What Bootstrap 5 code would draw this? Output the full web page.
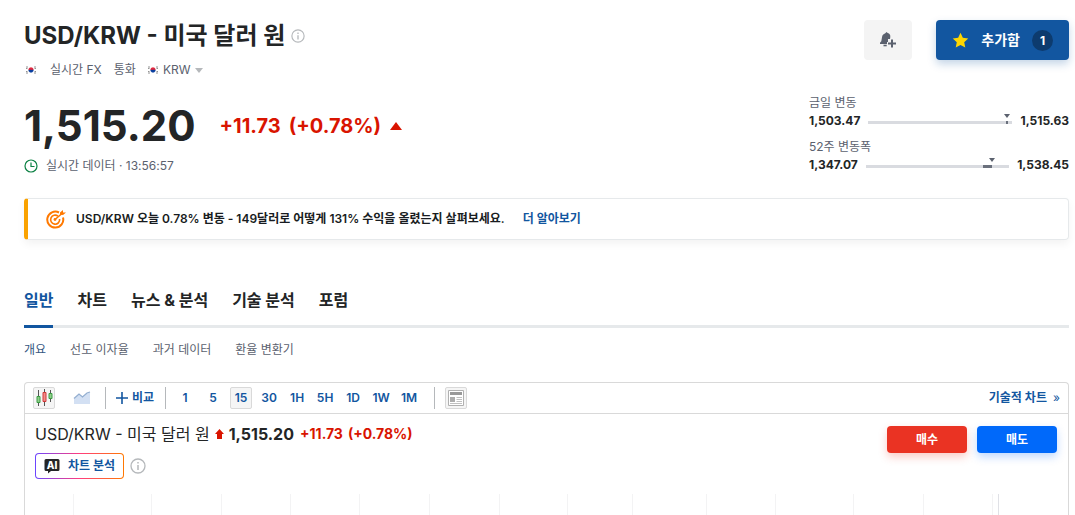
<!DOCTYPE html>
<html lang="ko">
<head>
<meta charset="utf-8">
<meta name="viewport" content="width=device-width, initial-scale=1">
<title>USD/KRW - 미국 달러 원</title>
<link href="https://cdn.jsdelivr.net/npm/bootstrap@5.3.0/dist/css/bootstrap.min.css" rel="stylesheet">
<style>
  body { font-family: Inter, "Noto Sans CJK KR", sans-serif; color: #232526; font-size: 12px; line-height: 16px; }
  a { text-decoration: none; color: #1256a0; }
  svg { display: block; flex: none; }
  .page-wrap { min-height: 100vh; padding: 16px 6px 0 24px; }
  .pair-head { gap: 6px; }
  .pair-title { font-size: 24px; line-height: 40px; font-weight: 700; }
  .muted { color: #5b616e; }
  .btn-bell { width: 48px; height: 40px; background: #f4f4f4; border-radius: 4px; color: #5b616e; }
  .btn-star { height: 40px; background: #1256a0; color: #fff; border-radius: 4px; font-size: 14px; line-height: 20px; font-weight: 700; padding: 0 16px; box-shadow: 0 4px 8px rgba(18,86,160,.25); }
  .btn-star:hover { background: #0f4a8a; color: #fff; }
  .count { width: 21px; height: 21px; border-radius: 50%; background: #0d3b6e; font-size: 12px; line-height: 21px; }
  .pair-meta { height: 20px; padding-left: 2px; }
  .feed { margin: 0 12px 0 14px; }
  .quote { margin-top: 15px; }
  .price-row { line-height: 62px; }
  .last-price { font-size: 42px; font-weight: 700; }
  .change { font-size: 20px; font-weight: 700; color: #d91400; }
  .data-time { line-height: 18px; }
  .ranges { width: 260px; }
  .range-row { font-weight: 700; gap: 8px; height: 20px; }
  .track { height: 3px; background: #d9dbe0; position: relative; top: 1px; }
  .track-fill { position: absolute; top: 0; height: 3px; background: #6a707c; }
  .track-pin { position: absolute; top: -7px; margin-left: -3px; border: 3px solid transparent; border-top: 4px solid #5b616e; border-bottom: 0; }
  .promo { height: 42px; margin-top: 23px; border: 1px solid #e6e9eb; border-left: 4px solid #faa200; border-radius: 4px; box-shadow: 0 4px 8px rgba(0,0,0,.05); padding-left: 18px; gap: 10px; font-weight: 600; color: #181c21; }
  .tabs-main { gap: 24px; border-bottom: 3px solid #e6e9eb; height: 40px; margin-top: 48px; }
  .tabs-main a { font-size: 16px; line-height: 24px; font-weight: 700; color: #232526; height: 40px; border-bottom: 3px solid transparent; }
  .tabs-main a.active { color: #1256a0; border-color: #1256a0; }
  .tabs-sub { gap: 24px; margin: 14px 0 24px; }
  .tabs-sub a { color: #5b616e; }
  .tabs-sub a.active { color: #35567f; }
  .chart-box { border: 1px solid #d9d9d9; border-bottom: 0; border-radius: 4px 4px 0 0; }
  .toolbar { height: 31px; border-bottom: 1px solid #d9d9d9; padding: 0 8px; }
  .toolbar .btn { font-size: 12px; line-height: 16px; font-weight: 600; color: #1256a0; padding: 0; border: 1px solid transparent; border-radius: 2px; height: 22px; min-width: 22px; display: flex; align-items: center; justify-content: center; }
  .toolbar .btn.on { background: #f5f5f5; border-color: #d9d9d9; }
  .toolbar a { font-weight: 600; }
  .compare { margin: 0 10px 0 12px; gap: 9px; }
  .spans { gap: 6px; margin: 0 14px 0 8px; }
  .sep { width: 1px; height: 22px; background: #b5b8bb; }
  .news-tool { gap: 10px; }
  .chart-head { padding: 10px 11px 0 10px; }
  .chart-name { font-size: 16px; line-height: 20px; gap: 5px; }
  .chart-change { font-size: 14px; font-weight: 700; color: #d91400; }
  .trade-pair { gap: 10px; padding-top: 2px; }
  .trade { width: 80px; height: 27px; font-size: 12px; line-height: 16px; font-weight: 700; color: #fff; padding: 0; border: 0; border-radius: 4px; }
  .trade:hover { color: #fff; }
  .sell, .sell:hover { background: #ea3323; box-shadow: 0 4px 8px rgba(234,51,35,.25); }
  .buy, .buy:hover { background: #0069fa; box-shadow: 0 4px 8px rgba(0,105,250,.25); }
  .ai-row { gap: 6px; margin-top: 9px; }
  .ai-btn { height: 26px; gap: 8px; border: 1px solid transparent; border-radius: 4px; background: linear-gradient(#fff,#fff) padding-box, linear-gradient(90deg,#6a45ff,#ff3d7f 50%,#ff7901) border-box; color: #1256a0; font-size: 12px; line-height: 16px; font-weight: 700; padding: 0 8px; }
  .plot { min-height: 20px; margin-top: 15px; position: relative; }
  .plot i { position: absolute; top: 0; bottom: 0; width: 1px; background: #f3f3f4; }
  .plot i.axis { background: #e0e1e6; }
</style>
</head>
<body>
<svg width="0" height="0" class="position-absolute" aria-hidden="true">
  <symbol id="flag" viewBox="0 0 10 8"><path d="M0 1h2M0 2.500h1.500M8 1h2M8.500 2.500H10M0 5.500h1.500M0 7h2M8.500 5.500H10M8 7h2" stroke="#777" stroke-width=".8"/><path d="M2.600 4a2.400 2.400 0 0 1 4.800 0z" fill="#e2263c" stroke="#e2263c" stroke-width=".4"/><path d="M2.600 4a2.400 2.400 0 0 0 4.800 0z" fill="#0b3fa0" stroke="#0b3fa0" stroke-width=".4"/></symbol>
  <symbol id="info" viewBox="0 0 16 16"><circle cx="8" cy="8" r="7" fill="none" stroke="#b5b8bb" stroke-width="1.300"/><path d="M8 7v5M8 4v1.600" stroke="#b5b8bb" stroke-width="1.500"/></symbol>
</svg>
<main class="page-wrap d-flex flex-column">
  <header class="d-flex justify-content-between align-items-start">
    <div class="pair-head d-flex align-items-center">
      <h1 class="pair-title mb-0">USD/KRW - 미국 달러 원</h1>
      <svg width="14" height="14"><use href="#info"/></svg>
    </div>
    <div class="d-flex gap-4 mt-1">
      <button class="btn btn-bell p-0 border-0 d-flex align-items-center justify-content-center" aria-label="알림 추가">
        <svg width="16" height="18" viewBox="0 0 16 18"><path d="M5 2.500 6.500 1l1.200 1.100c2 .6 2.800 2 2.600 4L10 8H8v3H7v2H0v-1.300l1.300-1.500.8-4.500C2.400 4 3.400 3 5 2.500z" fill="currentColor"/><path d="M3.500 14.500h3.200" stroke="currentColor" stroke-width="1.600"/><path d="M12 8.500v8M8 12.500h8" stroke="currentColor" stroke-width="2"/></svg>
      </button>
      <button class="btn btn-star border-0 d-flex align-items-center">
        <svg width="17" height="17" viewBox="0 0 16 16"><path d="m8 .8 2.200 4.700 5.100.6-3.800 3.500 1 5.100L8 12.200l-4.500 2.500 1-5.100L.7 6.100l5.100-.6z" fill="#ffd600"/></svg>
        <span class="ms-2 ps-1 me-2 pe-1">추가함</span>
        <span class="count">1</span>
      </button>
    </div>
  </header>

  <div class="pair-meta d-flex align-items-center muted">
    <svg width="10" height="8"><use href="#flag"/></svg>
    <span class="feed">실시간 FX</span>
    <span class="me-2">통화</span>
    <svg width="10" height="8" class="ms-1 me-1"><use href="#flag"/></svg>
    <span>&hairsp;KRW</span>
    <svg width="8" height="5" class="ms-1"><path d="M0 0h8L4 5z" fill="#b5b8bb"/></svg>
  </div>

  <section class="quote d-flex justify-content-between align-items-start">
    <div>
      <div class="price-row d-flex align-items-center">
        <span class="last-price me-4">1,515.20</span>
        <span class="change me-2">+11.73</span>
        <span class="change me-2">(+0.78%)</span>
        <svg width="14" height="8"><path d="M1 8 7 0l6 8z" fill="#d91400"/></svg>
      </div>
      <div class="data-time d-flex align-items-center gap-2 muted">
        <svg width="14" height="14"><circle cx="7" cy="7" r="6" fill="none" stroke="#0b8043" stroke-width="1.200"/><path d="M7 3.500v4h3.500" fill="none" stroke="#0b8043" stroke-width="1.200"/></svg>
        <span>실시간 데이터 · 13:56:57</span>
      </div>
    </div>
    <div class="ranges">
      <div class="muted">금일 변동</div>
      <div class="range-row d-flex align-items-center mb-2">
        <span>1,503.47</span>
        <div class="track flex-grow-1"><div class="track-fill" style="left:95.700%;width:1.400%"></div><div class="track-pin" style="left:96.500%"></div></div>
        <span>1,515.63</span>
      </div>
      <div class="muted">52주 변동폭</div>
      <div class="range-row d-flex align-items-center">
        <span>1,347.07</span>
        <div class="track flex-grow-1"><div class="track-fill" style="left:81.600%;width:6.300%"></div><div class="track-pin" style="left:87.900%"></div></div>
        <span>1,538.45</span>
      </div>
    </div>
  </section>

  <div class="promo d-flex align-items-center">
    <svg width="20" height="20" viewBox="0 0 20 20" fill="none" stroke="#ff7901"><path d="M13 3.500A8 8 0 1 0 17 8.500" stroke-width="2"/><path d="M12 7.200A4.500 4.500 0 1 0 13.600 10" stroke-width="1.600"/><path d="M9 10.500 16 4.500" stroke-width="1.600"/><circle cx="9" cy="10.500" r="1.400" fill="#ff7901" stroke="none"/><path d="M14 5.500V3.500L17 1v2.500h3L17 6z" fill="#ff7901" stroke="none"/></svg>
    <span>USD/KRW 오늘 0.78% 변동 - 149달러로 어떻게 131% 수익을 올렸는지 살펴보세요.</span>
    <a href="#" class="ms-2">더 알아보기</a>
  </div>

  <nav class="tabs-main d-flex">
    <a href="#" class="active">일반</a>
    <a href="#">차트</a>
    <a href="#">뉴스 &amp; 분석</a>
    <a href="#">기술 분석</a>
    <a href="#">포럼</a>
  </nav>
  <nav class="tabs-sub d-flex">
    <a href="#" class="active">개요</a>
    <a href="#">선도 이자율</a>
    <a href="#">과거 데이터</a>
    <a href="#">환율 변환기</a>
  </nav>

  <section class="chart-box flex-grow-1 d-flex flex-column">
    <div class="toolbar d-flex align-items-center">
      <button class="btn on me-3" aria-label="캔들 차트">
        <svg width="18" height="18" viewBox="0 0 18 18"><path d="M3.500 1v16M9.500 0v17M15.500 1v12" stroke="#555"/><path d="M2 7.500h3v6H2z" fill="#8fd08a" stroke="#3d9a44"/><path d="M8 3.500h3v9H8z" fill="#f28b88" stroke="#cf3a3a"/><path d="M14 4.500h3v5h-3z" fill="#8fd08a" stroke="#3d9a44"/></svg>
      </button>
      <button class="btn" aria-label="영역 차트">
        <svg width="18" height="14" viewBox="0 0 18 14"><path d="M1 8 6 3.500 9 6l4-3 4-2v12H1z" fill="#d3e0f3"/><path d="M1 7.500 6 3l3.500 3L14 2l3-1" fill="none" stroke="#93aed0" stroke-width="1.300"/></svg>
      </button>
      <div class="compare d-flex align-items-center">
        <span class="sep"></span>
        <button class="btn gap-1"><svg width="12" height="12" viewBox="0 0 12 12"><path d="M6 0v12M0 6h12" stroke="#1256a0" stroke-width="1.600"/></svg><span class="fw-bold">비교</span></button>
      </div>
      <span class="sep"></span>
      <div class="spans d-flex">
        <button class="btn">1</button>
        <button class="btn">5</button>
        <button class="btn on">15</button>
        <button class="btn">30</button>
        <button class="btn">1H</button>
        <button class="btn">5H</button>
        <button class="btn">1D</button>
        <button class="btn">1W</button>
        <button class="btn">1M</button>
      </div>
      <div class="news-tool d-flex">
        <span class="sep"></span>
        <button class="btn on" aria-label="뉴스">
          <svg width="18" height="18" viewBox="0 0 18 18"><path d="M1.500 1.500h15v15h-15z" fill="#fff" stroke="#b0b0b0"/><path d="M3 3h12v3H3z" fill="#999"/><path d="M3 8h5v5H3z" fill="#adadad"/><path d="M9.500 8.500H15M9.500 10.500H15M9.500 12.500H15M3 14.500h12" stroke="#c0c0c0"/></svg>
        </button>
      </div>
      <a href="#" class="ms-auto">기술적 차트&nbsp; <span class="fw-normal">»</span></a>
    </div>

    <div class="chart-head d-flex justify-content-between align-items-start">
      <div>
        <div class="chart-name d-flex align-items-center">
          <span>USD/KRW - 미국 달러 원</span>
          <svg width="9" height="10" viewBox="0 0 9 10"><path d="M4.500 0 9 5H7v5H2V5H0z" fill="#d91400"/></svg>
          <span class="fw-bold">1,515.20</span>
          <span class="chart-change">&hairsp;+11.73</span>
          <span class="chart-change">(+0.78%)</span>
        </div>
        <div class="ai-row d-flex align-items-center">
          <button class="ai-btn d-flex align-items-center">
            <svg width="16" height="16" viewBox="0 0 16 16"><path d="M2 1h12a1.500 1.500 0 0 1 1.500 1.500v9A1.500 1.500 0 0 1 14 13H7l-3 2.500V13H2A1.500 1.500 0 0 1 .5 11.500v-9A1.500 1.500 0 0 1 2 1z" fill="#232526"/><text x="8" y="10.500" text-anchor="middle" font-size="10" font-weight="800" fill="#fff">AI</text></svg>
            <span>차트 분석</span>
          </button>
          <svg width="16" height="16"><use href="#info"/></svg>
        </div>
      </div>
      <div class="trade-pair d-flex">
        <button class="btn trade sell">매수</button>
        <button class="btn trade buy">매도</button>
      </div>
    </div>

    <div class="plot flex-grow-1">
      <i style="left:4.650%"></i><i style="left:12.100%"></i><i style="left:18.800%"></i><i style="left:25.450%"></i><i style="left:32.050%"></i><i style="left:38.750%"></i><i style="left:45.400%"></i><i style="left:52%"></i><i style="left:58.200%"></i><i style="left:65.300%"></i><i style="left:71.950%"></i><i style="left:79.400%"></i><i style="left:86.100%"></i><i style="left:92.750%"></i><i class="axis" style="left:93.300%"></i>
    </div>
  </section>
</main>
<script src="https://cdn.jsdelivr.net/npm/bootstrap@5.3.0/dist/js/bootstrap.bundle.min.js"></script>
</body>
</html>
